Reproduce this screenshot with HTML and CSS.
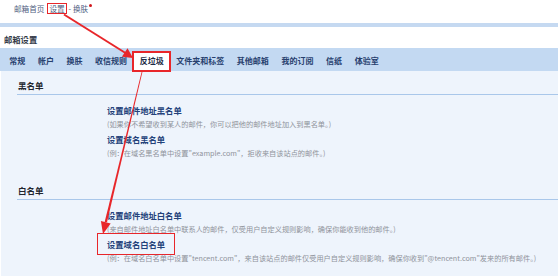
FILE: index.html
```html
<!DOCTYPE html>
<html lang="zh-CN">
<head>
<meta charset="utf-8">
<link rel="stylesheet" href="styles.css">
</head>
<body>
<div class="page">
  <div class="topnav">
    <span class="nav-link">邮箱首页</span>
    <span class="nav-link nav-mark">设置</span>
    <span class="nav-link">- 换肤</span><span class="dot"></span>
  </div>
  <div class="band"></div>
  <div class="title">邮箱设置</div>
  <div class="tabs">
    <span class="tab">常规</span>
    <span class="tab">帐户</span>
    <span class="tab">换肤</span>
    <span class="tab">收信规则</span>
    <span class="tab active">反垃圾</span>
    <span class="tab">文件夹和标签</span>
    <span class="tab">其他邮箱</span>
    <span class="tab">我的订阅</span>
    <span class="tab">信纸</span>
    <span class="tab">体验室</span>
  </div>
  <div class="content">
    <div class="sec-head">黑名单</div>
    <div class="items">
      <div class="item">
        <div class="link">设置邮件地址黑名单</div>
        <div class="desc">(如果你不希望收到某人的邮件，你可以把他的邮件地址加入到黑名单。)</div>
      </div>
      <div class="item">
        <div class="link">设置域名黑名单</div>
        <div class="desc">(例：在域名黑名单中设置"example.com"，拒收来自该站点的邮件。)</div>
      </div>
    </div>
    <div class="sec-head sec-white">白名单</div>
    <div class="items">
      <div class="item">
        <div class="link">设置邮件地址白名单</div>
        <div class="desc">(来自邮件地址白名单中联系人的邮件，仅受用户自定义规则影响，确保你能收到他的邮件。)</div>
      </div>
      <div class="item">
        <div class="link"><span class="link-mark">设置域名白名单</span></div>
        <div class="desc">(例：在域名白名单中设置"tencent.com"，来自该站点的邮件仅受用户自定义规则影响，确保你收到"@tencent.com"发来的所有邮件。)</div>
      </div>
    </div>
  </div>
  <svg class="annot" width="558" height="276" viewBox="0 0 558 276">
    <line x1="64" y1="14.5" x2="125.5" y2="53" stroke="#e8262a" stroke-width="2"/>
    <polygon points="133,58 121.9,56.7 127.5,48.3" fill="#e8262a"/>
    <polygon points="141.6,72 142.4,72 107,222.3 104.6,222.3" fill="#e8262a"/>
    <polygon points="103,234 110.7,223.5 100.9,221.1" fill="#e8262a"/>
  </svg>
</div>
</body>
</html>
```

FILE: styles.css
```css
html, body {
  margin: 0;
  padding: 0;
  background: #ffffff;
}
body {
  font-family: "Noto Sans CJK SC", "Noto Sans", sans-serif;
  width: 558px;
  height: 276px;
  overflow: hidden;
}
.page {
  position: relative;
  width: 558px;
  height: 276px;
}
.topnav {
  height: 23px;
  padding-left: 14px;
  display: flex;
  align-items: flex-start;
  padding-top: 4px;
  box-sizing: border-box;
  font-size: 7.6px;
  line-height: 9px;
  color: #50617f;
}
.nav-link {
  margin-right: 4px;
}
.nav-mark {
  margin-right: 3px;
  outline: 1.5px solid #e8262a;
  outline-offset: 0.5px;
  padding: 0 1px;
}
.dot {
  width: 3px;
  height: 3px;
  border-radius: 50%;
  background: #d0161b;
  margin-left: -3px;
}
.band {
  height: 4px;
  background: #c5d9f1;
}
.title {
  height: 21px;
  box-sizing: border-box;
  padding: 7px 0 0 4px;
  font-size: 8.3px;
  line-height: 10px;
  font-weight: bold;
  color: #333a48;
}
.tabs {
  height: 23px;
  background: #c3d9f2;
  display: flex;
  align-items: flex-end;
  padding-left: 3px;
  box-sizing: border-box;
}
.tab {
  height: 19px;
  line-height: 17px;
  padding: 0 6.3px;
  font-size: 8px;
  font-weight: bold;
  color: #27406e;
}
.tab.active {
  background: #ffffff;
  color: #1c2a44;
  outline: 2px solid #e8262a;
  outline-offset: -1px;
}
.content {
  background: #eef4fc;
  height: 205px;
  padding-left: 16px;
  margin-left: 1px;
}
.sec-head {
  padding: 8px 0 2px 1px;
  font-size: 8.5px;
  line-height: 13px;
  font-weight: bold;
  color: #22262e;
  border-bottom: 1.5px solid #a9c7ea;
}
.sec-white {
  margin-top: 23px;
  padding-top: 1px;
}
.items {
  padding: 8px 0 0 90px;
  display: flex;
  flex-direction: column;
  gap: 1px;
}
.link {
  font-size: 8.3px;
  line-height: 14px;
  font-weight: bold;
  color: #24427a;
}
.desc {
  font-size: 7.2px;
  line-height: 14px;
  color: #8e939b;
  white-space: nowrap;
}
.link-mark {
  display: inline-block;
  padding: 3px 9px;
  margin: -3px -9px;
  outline: 1.5px solid #e8262a;
}
.annot {
  position: absolute;
  left: 0;
  top: 0;
  pointer-events: none;
}
```
